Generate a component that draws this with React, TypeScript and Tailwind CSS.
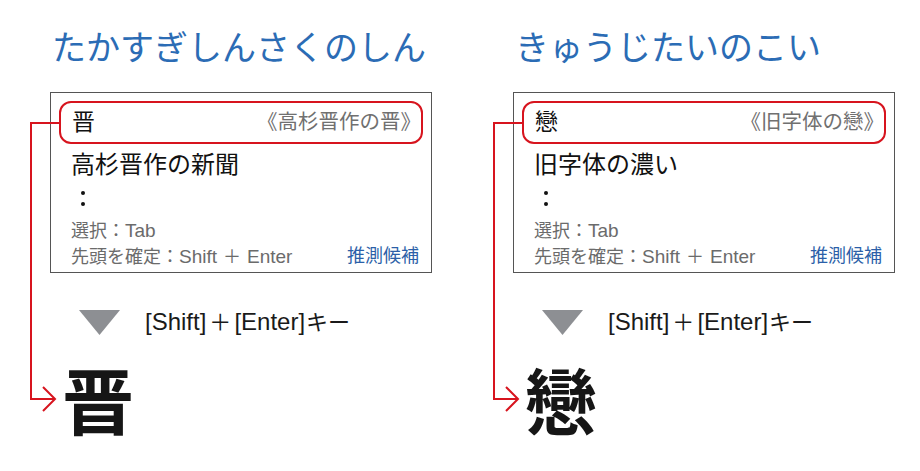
import React from "react";

type PanelProps = {
  title: string;
  head: string;
  reading: string;
  word: string;
};

function Connector() {
  return (
    <svg
      className="absolute left-0 top-0 pointer-events-none"
      width="463"
      height="471"
      viewBox="0 0 463 471"
      fill="none"
    >
      <path d="M60 123 H31 V399 H54" stroke="#d7141e" strokeWidth="2" />
      <path d="M43 387 L55 399 L43 411" stroke="#d7141e" strokeWidth="2" />
    </svg>
  );
}

function Panel({ title, head, reading, word }: PanelProps) {
  return (
    <div className="relative w-[463px] h-[471px] shrink-0">
      <h1 className="pt-[26px] pl-[52px] text-[34px] leading-[40px] font-normal text-[#2b6cb5] font-['Noto_Sans_CJK_JP',sans-serif]">
        {title}
      </h1>
      <div className="mt-[26px] ml-[50px] w-[382px] h-[181px] border-[1.5px] border-[#555555] pt-[7.5px] px-[8px]">
        <div className="h-[43px] rounded-[12px] border-2 border-[#d7141e] flex items-center justify-between pl-[11px] pr-0">
          <span className="text-[23px] leading-none text-[#111111]">{head}</span>
          <span className="text-[20.5px] leading-none text-[#707070]">《{reading}》</span>
        </div>
        <div className="mt-[7px] pl-[12px] text-[24px] leading-[28px] text-[#111111]">{word}</div>
        <div className="mt-[12px] ml-[21.5px] flex flex-col gap-[7px]">
          <span className="block w-[4px] h-[4px] rounded-full bg-[#111111]" />
          <span className="block w-[4px] h-[4px] rounded-full bg-[#111111]" />
        </div>
        <div className="mt-[12px] pl-[12px] text-[18px] leading-[25px] text-[#6b6b6b]">
          選択：<span className="text-[19px]">Tab</span>
        </div>
        <div className="flex justify-between pl-[12px] pr-[4px] text-[18px] leading-[25px]">
          <span className="text-[#6b6b6b]">
            先頭を確定：<span className="text-[19px]">Shift</span>
            <span className="mx-[6px]">＋</span>
            <span className="text-[19px]">Enter</span>
          </span>
          <span className="text-[#2c5fa8]">推測候補</span>
        </div>
      </div>
      <div className="mt-[35px] ml-[79px] flex items-center gap-[25px]">
        <svg width="41" height="25" viewBox="0 0 41 25">
          <polygon points="0,0 41,0 20.5,25" fill="#8d8f93" />
        </svg>
        <span className="text-[22px] leading-[28px] text-[#1a1a1a]">
          <span className="text-[24px]">[Shift]</span>
          <span className="mx-[3px]">＋</span>
          <span className="text-[24px]">[Enter]</span>
          <span className="ml-[1px]">キー</span>
        </span>
      </div>
      <div className="mt-[22px] ml-[62px] text-[72px] leading-[78px] font-bold text-[#161616] font-['Noto_Sans_CJK_JP',sans-serif]">
        {head}
      </div>
      <Connector />
    </div>
  );
}

export default function App() {
  return (
    <div className="w-[920px] h-[471px] bg-white flex overflow-hidden font-['Liberation_Sans','Noto_Sans_CJK_JP',sans-serif]">
      <Panel title="たかすぎしんさくのしん" head="晋" reading="高杉晋作の晋" word="高杉晋作の新聞" />
      <Panel title="きゅうじたいのこい" head="戀" reading="旧字体の戀" word="旧字体の濃い" />
    </div>
  );
}
